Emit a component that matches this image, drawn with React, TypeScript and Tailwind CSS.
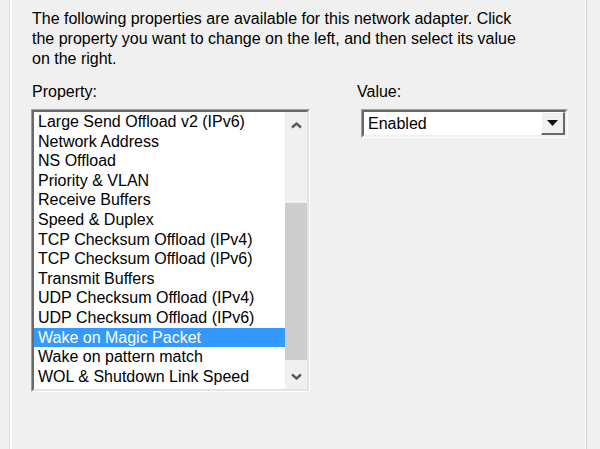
import React from 'react';

const properties = [
  'Large Send Offload v2 (IPv6)',
  'Network Address',
  'NS Offload',
  'Priority & VLAN',
  'Receive Buffers',
  'Speed & Duplex',
  'TCP Checksum Offload (IPv4)',
  'TCP Checksum Offload (IPv6)',
  'Transmit Buffers',
  'UDP Checksum Offload (IPv4)',
  'UDP Checksum Offload (IPv6)',
  'Wake on Magic Packet',
  'Wake on pattern match',
  'WOL & Shutdown Link Speed',
];

const selected = 'Wake on Magic Packet';

const Chevron = ({ down }: { down?: boolean }) => (
  <svg width="11" height="7" viewBox="0 0 11 7" className="block">
    <path
      d={down ? 'M1 1.5 L5.5 5.5 L10 1.5' : 'M1 5.5 L5.5 1.5 L10 5.5'}
      fill="none"
      stroke="#5a5a5a"
      strokeWidth="2.4"
    />
  </svg>
);

function PropertyList() {
  return (
    <div className="w-[279px] h-[283px] border border-t-[#a0a0a0] border-l-[#a0a0a0] border-b-white border-r-white">
      <div className="h-full flex bg-white border-2 border-t-[#696969] border-l-[#696969] border-b-[#e3e3e3] border-r-[#e3e3e3]">
        <div className="flex-1 flex flex-col">
          {properties.map((p) => (
            <div
              key={p}
              className={
                p === selected
                  ? 'h-[19.6px] leading-[20px] pl-[4px] bg-[#3399ff] text-white whitespace-nowrap'
                  : 'h-[19.6px] leading-[20px] pl-[4px] text-black whitespace-nowrap'
              }
            >
              {p}
            </div>
          ))}
        </div>
        {/* vertical scrollbar, scrolled to the end */}
        <div className="w-[22px] flex flex-col bg-[#f0f0f0]">
          <div className="h-[26px] flex items-center justify-center">
            <Chevron />
          </div>
          <div className="flex-1 flex flex-col">
            <div className="h-[65px]" />
            <div className="h-[157px] bg-[#cdcdcd]" />
          </div>
          <div className="h-[26px] flex items-center justify-center">
            <Chevron down />
          </div>
        </div>
      </div>
    </div>
  );
}

function ValueCombo() {
  return (
    <div className="w-[207px] h-[29px] border border-t-[#a0a0a0] border-l-[#a0a0a0] border-b-white border-r-white">
      <div className="h-full flex bg-white border-2 border-t-[#696969] border-l-[#696969] border-b-[#f0f0f0] border-r-[#f0f0f0]">
        <div className="flex-1 pl-[4px] leading-[24px] text-black">Enabled</div>
        <div className="w-[24px] flex items-center justify-center bg-[#f0f0f0] border-t border-l border-t-white border-l-white border-b-2 border-r-2 border-b-[#696969] border-r-[#696969]">
          <svg width="11" height="6" viewBox="0 0 11 6" className="block">
            <path d="M0 0 H11 L5.5 6 Z" fill="#111" />
          </svg>
        </div>
      </div>
    </div>
  );
}

export default function App() {
  return (
    <div
      className="w-[600px] h-[449px] bg-[#f0f0f0] pl-[9px] pr-[13px] text-[16px] text-black overflow-hidden"
      style={{ fontFamily: '"Liberation Sans", Arial, sans-serif' }}
    >
      <div className="h-full border-l border-r border-l-[#d9d9d9] border-r-[#d0d0d0]">
        <div className="h-full border-l-2 border-r border-l-white border-r-white pl-[19px] pt-[9px]">
          <p className="leading-[20px] pl-[1px]">
            The following properties are available for this network adapter. Click
            <br />
            the property you want to change on the left, and then select its value
            <br />
            on the right.
          </p>
          <div className="flex mt-[13px]">
            <div className="flex flex-col">
              <div className="leading-[20px] pl-[1px]">Property:</div>
              <div className="mt-[7px]">
                <PropertyList />
              </div>
            </div>
            <div className="flex flex-col ml-[47px]">
              <div className="leading-[20px]">Value:</div>
              <div className="mt-[7px] ml-[4px]">
                <ValueCombo />
              </div>
            </div>
          </div>
        </div>
      </div>
    </div>
  );
}
